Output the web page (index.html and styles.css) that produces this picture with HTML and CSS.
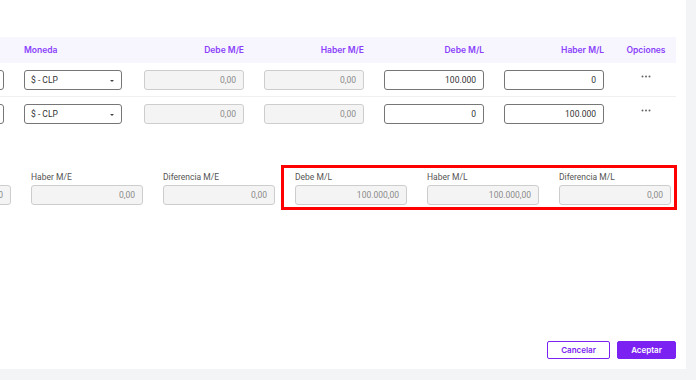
FILE: index.html
```html
<!DOCTYPE html>
<html>
	<head>
		<meta charset="UTF-8">
		<title>Asiento contable</title>
		<link rel="stylesheet" href="styles.css">
	</head>
	<body>
		<div class="panel">
			<div class="table-wrap">
				<div class="table">
					<div class="row head">
						<div></div>
						<div class="left">Moneda</div>
						<div>Debe M/E</div>
						<div>Haber M/E</div>
						<div>Debe M/L</div>
						<div>Haber M/L</div>
						<div class="center">Opciones</div>
					</div>
					<div class="row">
						<div class="field"></div>
						<div class="select">$ - CLP<span class="caret"></span></div>
						<div class="field off">0,00</div>
						<div class="field off">0,00</div>
						<div class="field">100.000</div>
						<div class="field">0</div>
						<div class="opts"><svg width="10" height="3" viewBox="0 0 10 3"><circle cx="1.5" cy="1.5" r="1"/><circle cx="5" cy="1.5" r="1"/><circle cx="8.5" cy="1.5" r="1"/></svg></div>
					</div>
					<div class="row">
						<div class="field"></div>
						<div class="select">$ - CLP<span class="caret"></span></div>
						<div class="field off">0,00</div>
						<div class="field off">0,00</div>
						<div class="field">0</div>
						<div class="field">100.000</div>
						<div class="opts"><svg width="10" height="3" viewBox="0 0 10 3"><circle cx="1.5" cy="1.5" r="1"/><circle cx="5" cy="1.5" r="1"/><circle cx="8.5" cy="1.5" r="1"/></svg></div>
					</div>
				</div>
			</div>
			<div class="totals-wrap">
				<div class="totals-clip">
					<div class="totals">
						<div class="total">
							<label>Debe M/E</label>
							<div class="field off">0,00</div>
						</div>
						<div class="total">
							<label>Haber M/E</label>
							<div class="field off">0,00</div>
						</div>
						<div class="total">
							<label>Diferencia M/E</label>
							<div class="field off">0,00</div>
						</div>
						<div class="total">
							<label>Debe M/L</label>
							<div class="field off">100.000,00</div>
						</div>
						<div class="total">
							<label>Haber M/L</label>
							<div class="field off">100.000,00</div>
						</div>
						<div class="total">
							<label>Diferencia M/L</label>
							<div class="field off">0,00</div>
						</div>
					</div>
				</div>
				<div class="mark"></div>
			</div>
			<div class="footer">
				<button class="btn ghost">Cancelar</button>
				<button class="btn primary">Aceptar</button>
			</div>
		</div>
	</body>
</html>
```

FILE: styles.css
```css
body{
	margin: 0;
	padding: 0;
	background: #f3f4f6;
	font-family: Inter, "Liberation Sans", sans-serif;
}
.panel{
	width: 686px;
	height: 369px;
	background: #fff;
	display: flex;
	flex-direction: column;
	padding-top: 37px;
	box-sizing: border-box;
}
.table-wrap{
	overflow: hidden;
}
.table{
	margin-left: -96px;
	width: 772px;
}
.row{
	display: grid;
	grid-template-columns: 100px 100px 100px 100px 100px 100px 44px;
	column-gap: 20px;
	padding: 7px 8px 6px 0;
	border-bottom: 1px solid #f0f0f0;
}
.row:last-child{
	border-bottom: none;
}
.row.head{
	height: 26px;
	padding: 0 8px 0 0;
	box-sizing: border-box;
	align-items: center;
	background: #f7f5fe;
	border-bottom: none;
	color: #8a3ffc;
	font-size: 8.5px;
	font-weight: 600;
	text-align: right;
}
.row.head .left{
	text-align: left;
}
.row.head .center{
	text-align: center;
}
.field{
	height: 20px;
	box-sizing: border-box;
	border: 1px solid #767676;
	border-radius: 3px;
	background: #fff;
	font-family: Roboto, "Liberation Sans", sans-serif;
	font-size: 8.5px;
	line-height: 18px;
	color: #333;
	text-align: right;
	padding-right: 7px;
}
.field.off{
	background: #f4f4f4;
	border-color: #cdcdcd;
	color: #8a8a8a;
}
.select{
	width: 98px;
	height: 20px;
	box-sizing: border-box;
	border: 1px solid #767676;
	border-radius: 3px;
	font-family: Roboto, "Liberation Sans", sans-serif;
	font-size: 8.5px;
	line-height: 18px;
	color: #333;
	padding: 0 7px 0 6px;
	display: flex;
	align-items: center;
	justify-content: space-between;
}
.caret{
	width: 0;
	height: 0;
	border-left: 2px solid transparent;
	border-right: 2px solid transparent;
	border-top: 2px solid #444;
	margin-top: 2px;
}
.opts{
	display: flex;
	justify-content: center;
	padding-top: 5px;
	fill: #666;
}
.totals-wrap{
	position: relative;
	margin-top: 42px;
}
.totals-clip{
	overflow: hidden;
}
.totals{
	display: flex;
	gap: 20px;
	margin-left: -101px;
}
.total{
	width: 112px;
	flex: none;
}
.total label{
	display: block;
	font-family: Roboto, "Liberation Sans", sans-serif;
	font-size: 8.5px;
	line-height: 11px;
	color: #555;
	margin-bottom: 2px;
}
.mark{
	position: absolute;
	left: 281px;
	top: -7px;
	width: 396px;
	height: 45px;
	box-sizing: border-box;
	border: 3px solid #f00;
}
.footer{
	margin-top: auto;
	display: flex;
	justify-content: flex-end;
	gap: 7px;
	padding: 0 10px 10px 0;
}
.btn{
	height: 18px;
	box-sizing: border-box;
	border-radius: 2px;
	font-family: Inter, "Liberation Sans", sans-serif;
	font-size: 8px;
	font-weight: 600;
	padding: 0;
}
.btn.ghost{
	width: 63px;
	background: #fff;
	border: 1px solid #7b22f2;
	color: #7b22f2;
}
.btn.primary{
	width: 59px;
	background: #7b22f2;
	border: 1px solid #7b22f2;
	color: #fff;
}
```
